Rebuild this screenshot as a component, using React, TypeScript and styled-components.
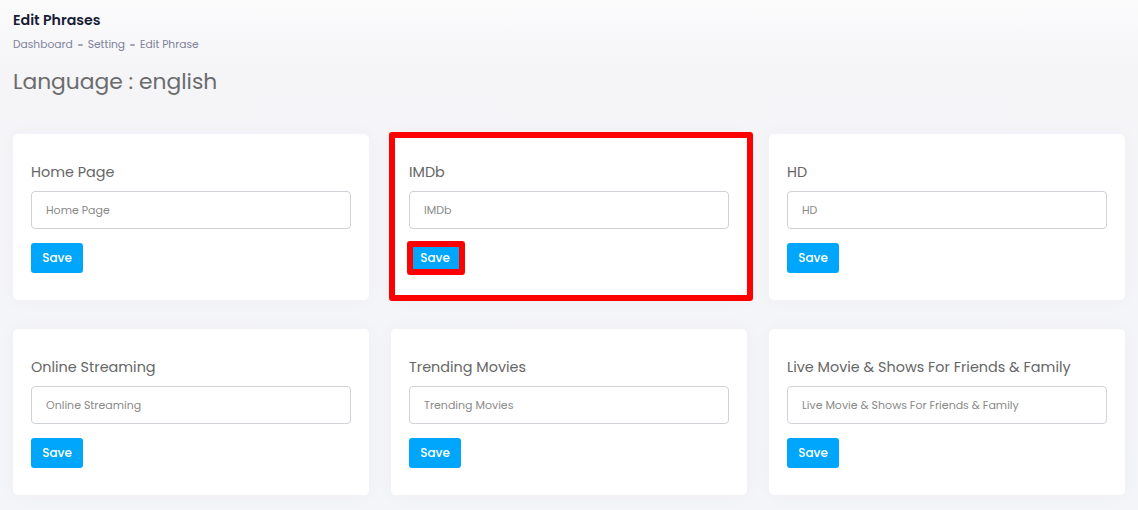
import React from "react";
import styled, { createGlobalStyle } from "styled-components";

const Global = createGlobalStyle`
  html, body { margin: 0; padding: 0; }
  body {
    font-family: "Poppins", "Inter", "Open Sans", sans-serif;
    background: linear-gradient(180deg, #fbfbfc 0px, #f5f5f8 70px, #f4f5f8 100%);
    min-height: 510px;
  }
  * { box-sizing: border-box; }
`;

const Page = styled.div`
  padding: 10px 13px 14px;
`;

const Title = styled.h1`
  margin: 0;
  font-size: 14.2px;
  line-height: 20px;
  font-weight: 600;
  color: #181c32;
`;

const Crumbs = styled.div`
  margin-top: 7px;
  display: flex;
  align-items: center;
  gap: 5px;
  font-size: 10.7px;
  line-height: 16px;
  color: #7e8299;
`;

const Sep = styled.span`
  display: inline-block;
  width: 5px;
  height: 2px;
  background: #a1a5b7;
  border-radius: 1px;
`;

const Heading = styled.h2`
  margin: 13px 0 0;
  font-size: 21.8px;
  line-height: 32px;
  font-weight: 400;
  color: #6b6b6b;
`;

const Grid = styled.div`
  margin-top: 36px;
  display: grid;
  grid-template-columns: repeat(3, 356px);
  column-gap: 22px;
  row-gap: 29px;
`;

const Card = styled.div`
  position: relative;
  background: #fff;
  border-radius: 5px;
  height: 166px;
  padding: 26px 18px 0;
  box-shadow: 0 0 20px rgba(82, 63, 105, 0.03);
`;

const Label = styled.div`
  font-size: 14.4px;
  line-height: 24px;
  color: #666;
  margin-bottom: 7px;
`;

const Input = styled.input`
  display: block;
  width: 320px;
  height: 38px;
  border: 1px solid #cfd2d6;
  border-radius: 4px;
  padding: 0 14px;
  font-family: inherit;
  font-size: 11px;
  color: #555;
  background: #fff;
  outline: none;
  &::placeholder { color: #8a8a8a; }
`;

const ButtonWrap = styled.div`
  position: relative;
  margin-top: 14px;
  width: 52px;
  height: 30px;
`;

const SaveButton = styled.button`
  width: 52px;
  height: 30px;
  border: none;
  border-radius: 3px;
  background: #00a6fb;
  color: #fff;
  font-family: inherit;
  font-size: 12px;
  font-weight: 500;
  padding: 0;
  cursor: pointer;
`;

const Highlight = styled.div<{ $l: number; $t: number; $w: number; $h: number; $r: number }>`
  position: absolute;
  left: ${(p) => p.$l}px;
  top: ${(p) => p.$t}px;
  width: ${(p) => p.$w}px;
  height: ${(p) => p.$h}px;
  border: 6px solid #ff0000;
  border-radius: ${(p) => p.$r}px;
  pointer-events: none;
`;

const phrases = [
  "Home Page",
  "IMDb",
  "HD",
  "Online Streaming",
  "Trending Movies",
  "Live Movie & Shows For Friends & Family",
];

export default function App() {
  return (
    <>
      <Global />
      <Page>
        <Title>Edit Phrases</Title>
        <Crumbs>
          <span>Dashboard</span>
          <Sep />
          <span>Setting</span>
          <Sep />
          <span>Edit Phrase</span>
        </Crumbs>
        <Heading>Language : english</Heading>
        <Grid>
          {phrases.map((p, i) => (
            <Card key={p}>
              <Label>{p}</Label>
              <Input placeholder={p} />
              <ButtonWrap>
                <SaveButton>Save</SaveButton>
                {i === 1 && <Highlight $l={-2} $t={-2} $w={58} $h={34} $r={3} />}
              </ButtonWrap>
              {i === 1 && <Highlight $l={-2} $t={-2} $w={364} $h={169} $r={3} />}
            </Card>
          ))}
        </Grid>
      </Page>
    </>
  );
}
